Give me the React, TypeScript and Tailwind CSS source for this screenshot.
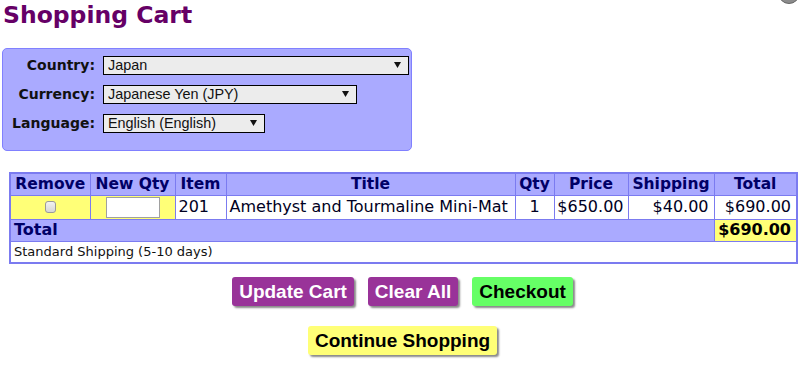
import React from 'react';

// Verdana look-alike for the page text, Arial look-alike for form controls and buttons
const verdana = "font-['DejaVu_Sans',Verdana,sans-serif]";
const arial = "font-['Liberation_Sans',Arial,sans-serif]";

interface SelectBoxProps {
  value: string;
  width: string;
}

const SelectBox: React.FC<SelectBoxProps> = ({ value, width }) => (
  <div className={`relative h-[19px] ${width}`}>
    <select
      defaultValue={value}
      className={`block h-full w-full appearance-none border border-black bg-[#ececec] pl-[4px] text-[14.4px] leading-[17px] text-[#111] outline-none ${arial}`}
    >
      <option value={value}>{value}</option>
    </select>
    <svg
      className="pointer-events-none absolute right-[8px] top-[6px]"
      width="7"
      height="6"
      viewBox="0 0 7 6"
    >
      <path d="M0 0H7L3.5 6Z" fill="#111" />
    </svg>
  </div>
);

interface FieldRowProps {
  label: string;
  children: React.ReactNode;
}

const FieldRow: React.FC<FieldRowProps> = ({ label, children }) => (
  <div className="flex h-[19px] items-center">
    <span className={`w-[92px] text-right text-[14px] font-bold leading-[19px] text-[#111] ${verdana}`}>{label}</span>
    <div className="ml-[8px]">{children}</div>
  </div>
);

interface CartButtonProps {
  label: string;
  tone: 'purple' | 'green' | 'yellow';
}

const CartButton: React.FC<CartButtonProps> = ({ label, tone }) => {
  const colours = {
    purple: 'bg-[#993399] text-white',
    green: 'bg-[#66ff66] text-black',
    yellow: 'bg-[#ffff77] text-black',
  }[tone];
  return (
    <button
      type="button"
      className={`h-[29px] rounded-[3px] px-[7px] text-[19px] font-bold leading-[29px] shadow-[2px_2px_2px_#8a8a8a] ${colours} ${arial}`}
    >
      {label}
    </button>
  );
};

const th = 'h-[22px] border border-[#7b7bf0] bg-[#aaaaff] p-0 text-center text-[15.5px] font-bold leading-[19px] text-[#000066]';
const td = 'h-[24px] border border-[#7b7bf0] bg-white p-0 text-[16px] leading-[20px] text-[#000022]';

export default function App() {
  return (
    <div className={`relative min-h-[370px] overflow-hidden bg-white ${verdana}`}>
      {/* window close button peeking in at the top right */}
      <div className="absolute right-[-1px] top-[-18px] h-[22px] w-[22px] rounded-full border border-[#666] bg-[#8c8c8c]" />

      <h1 className="h-[30px] pl-[3px] text-[23.5px] font-bold leading-[30px] text-[#660066]">
        Shopping Cart
      </h1>

      {/* Locale options */}
      <div className="ml-[2px] mt-[18px] flex h-[103px] w-[410px] flex-col gap-[10px] rounded-[5px] border border-[#8080ff] bg-[#aaaaff] pt-[7px]">
        <FieldRow label="Country:">
          <SelectBox value="Japan" width="w-[306px]" />
        </FieldRow>
        <FieldRow label="Currency:">
          <SelectBox value="Japanese Yen (JPY)" width="w-[254px]" />
        </FieldRow>
        <FieldRow label="Language:">
          <SelectBox value="English (English)" width="w-[162px]" />
        </FieldRow>
      </div>

      <div className="ml-[9px] mt-[21px] w-[787px]">
        <table className="w-[787px] table-fixed border-collapse border-2 border-[#7b7bf0]">
          <colgroup>
            <col className="w-[80px]" />
            <col className="w-[85px]" />
            <col className="w-[51px]" />
            <col className="w-[289px]" />
            <col className="w-[39px]" />
            <col className="w-[74px]" />
            <col className="w-[86px]" />
            <col className="w-[83px]" />
          </colgroup>
          <thead>
            <tr>
              <th className={th}>Remove</th>
              <th className={th}>New Qty</th>
              <th className={th}>Item</th>
              <th className={th}>Title</th>
              <th className={th}>Qty</th>
              <th className={th}>Price</th>
              <th className={th}>Shipping</th>
              <th className={th}>Total</th>
            </tr>
          </thead>
          <tbody>
            <tr>
              <td className="h-[24px] border border-[#7b7bf0] bg-[#ffff77] p-0">
                <span className="mx-auto block h-[12px] w-[11px] rounded-[3px] border border-[#9a9a9a] bg-gradient-to-b from-[#f2f2f2] to-[#d6d6d6]" />
              </td>
              <td className="h-[24px] border border-[#7b7bf0] bg-[#ffff77] p-0">
                <input
                  type="text"
                  className="mx-auto block h-[21px] w-[54px] border border-[#a0a0a0] bg-white outline-none"
                />
              </td>
              <td className={`${td} pl-[3px]`}>201</td>
              <td className={`${td} whitespace-nowrap pl-[3px]`}>Amethyst and Tourmaline Mini-Mat</td>
              <td className={`${td} text-center`}>1</td>
              <td className={`${td} pr-[4px] text-right`}>$650.00</td>
              <td className={`${td} pr-[5px] text-right`}>$40.00</td>
              <td className={`${td} pr-[5px] text-right`}>$690.00</td>
            </tr>
            <tr>
              <td
                colSpan={7}
                className="h-[22px] border border-[#7b7bf0] bg-[#aaaaff] p-0 pl-[3px] text-[16px] font-bold leading-[20px] text-[#000066]"
              >
                Total
              </td>
              <td className="h-[22px] border border-[#7b7bf0] bg-[#ffff77] p-0 pr-[5px] text-right text-[16px] font-bold leading-[20px] text-black">
                $690.00
              </td>
            </tr>
            <tr>
              <td colSpan={8} className="h-[22px] border border-[#7b7bf0] bg-white p-0 pl-[3px] text-[13px] leading-[18px] text-[#111]">
                Standard Shipping (5-10 days)
              </td>
            </tr>
          </tbody>
        </table>

        <div className="mt-[13px] flex justify-center gap-[14px]">
          <CartButton label="Update Cart" tone="purple" />
          <CartButton label="Clear All" tone="purple" />
          <CartButton label="Checkout" tone="green" />
        </div>
        <div className="mt-[20px] flex justify-center">
          <CartButton label="Continue Shopping" tone="yellow" />
        </div>
      </div>
    </div>
  );
}
